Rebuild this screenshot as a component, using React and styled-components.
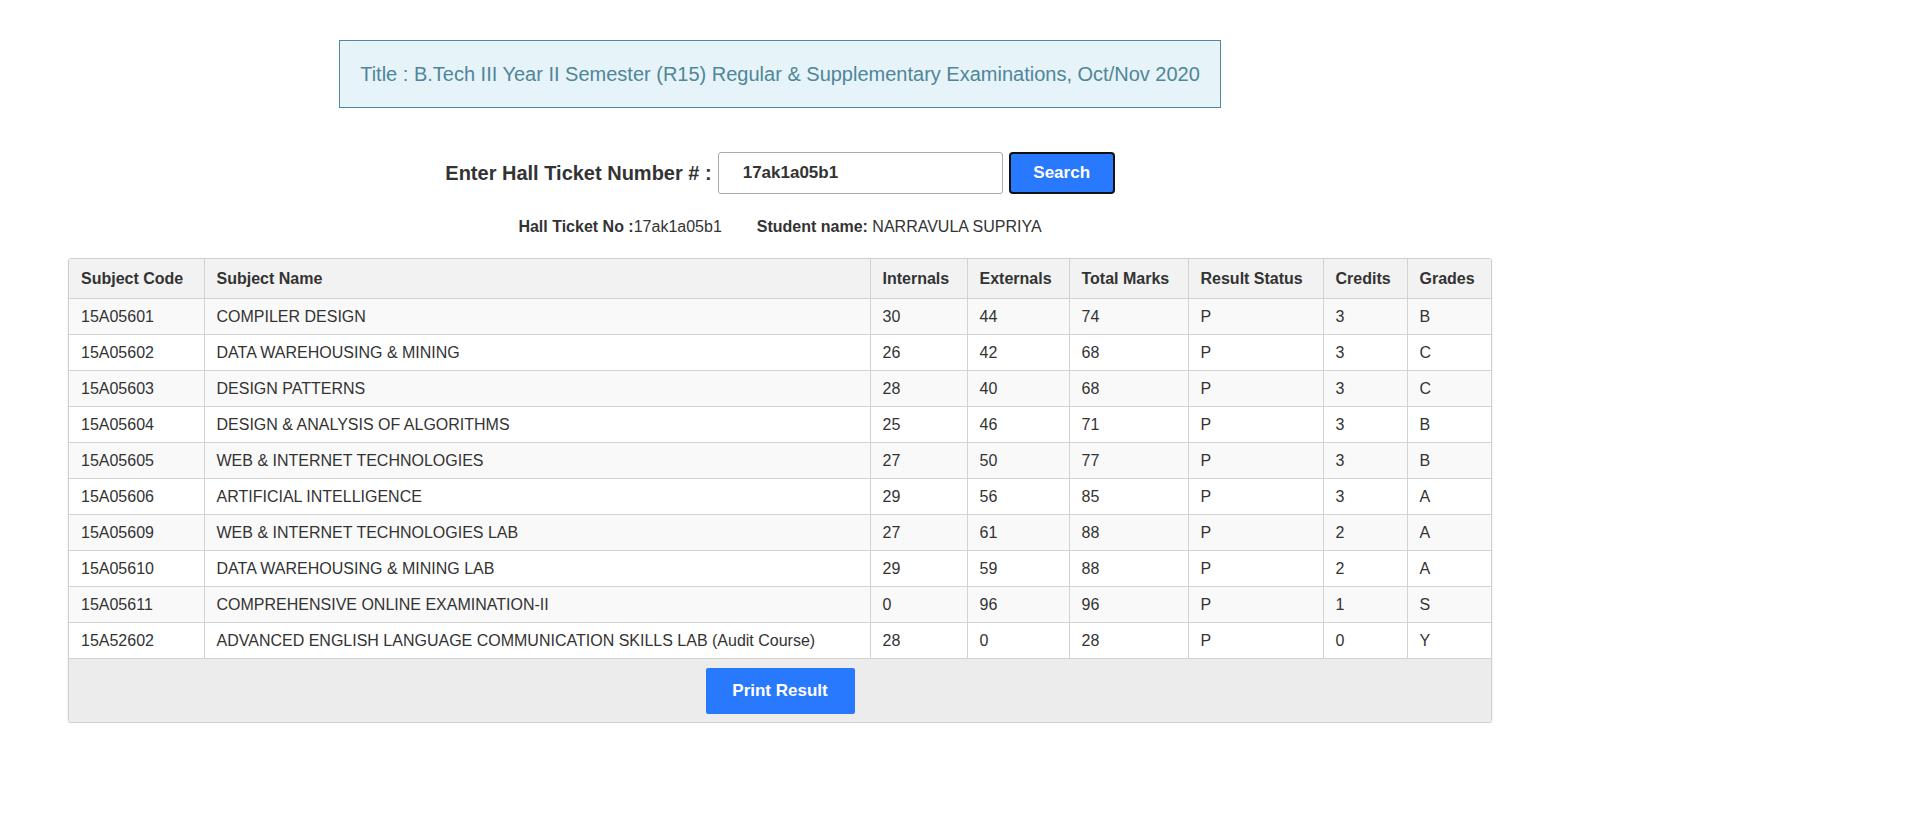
import React from 'react';
import styled, { createGlobalStyle } from 'styled-components';

const results = [
  ['15A05601', 'COMPILER DESIGN', 30, 44, 74, 'P', 3, 'B'],
  ['15A05602', 'DATA WAREHOUSING & MINING', 26, 42, 68, 'P', 3, 'C'],
  ['15A05603', 'DESIGN PATTERNS', 28, 40, 68, 'P', 3, 'C'],
  ['15A05604', 'DESIGN & ANALYSIS OF ALGORITHMS', 25, 46, 71, 'P', 3, 'B'],
  ['15A05605', 'WEB & INTERNET TECHNOLOGIES', 27, 50, 77, 'P', 3, 'B'],
  ['15A05606', 'ARTIFICIAL INTELLIGENCE', 29, 56, 85, 'P', 3, 'A'],
  ['15A05609', 'WEB & INTERNET TECHNOLOGIES LAB', 27, 61, 88, 'P', 2, 'A'],
  ['15A05610', 'DATA WAREHOUSING & MINING LAB', 29, 59, 88, 'P', 2, 'A'],
  ['15A05611', 'COMPREHENSIVE ONLINE EXAMINATION-II', 0, 96, 96, 'P', 1, 'S'],
  ['15A52602', 'ADVANCED ENGLISH LANGUAGE COMMUNICATION SKILLS LAB (Audit Course)', 28, 0, 28, 'P', 0, 'Y'],
];

const columns = [
  ['Subject Code', 135],
  ['Subject Name', 666],
  ['Internals', 97],
  ['Externals', 102],
  ['Total Marks', 119],
  ['Result Status', 135],
  ['Credits', 84],
  ['Grades', 86],
];

function App() {
  return (
    <>
      <GlobalStyle />
      <Page>
        <TitleBox>
          Title : B.Tech III Year II Semester (R15) Regular &amp; Supplementary Examinations, Oct/Nov 2020
        </TitleBox>

        <SearchRow>
          <Label htmlFor="htno">Enter Hall Ticket Number # :</Label>
          <TicketInput id="htno" defaultValue="17ak1a05b1" />
          <BlueButton $outlined>Search</BlueButton>
        </SearchRow>

        <Info>
          <span><b>Hall Ticket No :</b>17ak1a05b1</span>
          <span><b>Student name:</b> NARRAVULA SUPRIYA</span>
        </Info>

        <Card>
          <Table>
            <colgroup>
              {columns.map(([name, w]) => (
                <col key={name} style={{ width: w }} />
              ))}
            </colgroup>
            <thead>
              <tr>
                {columns.map(([name]) => (
                  <Th key={name}>{name}</Th>
                ))}
              </tr>
            </thead>
            <tbody>
              {results.map((row, i) => (
                <Row key={row[0]} $striped={i % 2 === 0}>
                  {row.map((cell, j) => (
                    <Td key={j}>{cell}</Td>
                  ))}
                </Row>
              ))}
            </tbody>
          </Table>
          <Footer>
            <BlueButton $wide>Print Result</BlueButton>
          </Footer>
        </Card>
      </Page>
    </>
  );
}

const GlobalStyle = createGlobalStyle`
  body {
    margin: 8px;
    background: #fff;
    color: #333;
    font-family: "Liberation Sans", Arial, sans-serif;
  }
`;

const Page = styled.div`
  width: 1424px;
  margin-left: 60px;
  display: flex;
  flex-direction: column;
  align-items: center;
`;

const TitleBox = styled.div`
  margin-top: 32px;
  width: 882px;
  height: 68px;
  box-sizing: border-box;
  border: 1px solid #4b8b9d;
  background: #e6f3f9;
  color: #4f8698;
  font-size: 20px;
  display: flex;
  align-items: center;
  justify-content: center;
`;

const SearchRow = styled.div`
  margin-top: 44px;
  display: flex;
  align-items: center;
`;

const Label = styled.label`
  font-size: 20px;
  font-weight: bold;
  color: #333;
  margin-right: 6px;
`;

const TicketInput = styled.input`
  width: 285px;
  height: 42px;
  box-sizing: border-box;
  border: 1px solid #aaa;
  border-radius: 3px;
  padding: 0 0 0 24px;
  font-family: inherit;
  font-size: 17px;
  font-weight: bold;
  color: #333;
  outline: none;
`;

const BlueButton = styled.button`
  margin-left: ${(p) => (p.$outlined ? '6px' : '0')};
  width: ${(p) => (p.$wide ? '149px' : '106px')};
  height: ${(p) => (p.$wide ? '46px' : '42px')};
  box-sizing: border-box;
  background: #2979ff;
  border: ${(p) => (p.$outlined ? '2px solid #111' : 'none')};
  border-radius: ${(p) => (p.$outlined ? '4px' : '2px')};
  color: #fff;
  font-family: inherit;
  font-size: 17px;
  font-weight: bold;
  cursor: pointer;
`;

const Info = styled.div`
  margin-top: 23px;
  display: flex;
  gap: 35px;
  font-size: 16px;
  line-height: 20px;

  b {
    font-weight: bold;
  }
`;

const Card = styled.div`
  margin-top: 21px;
  width: 100%;
  box-sizing: border-box;
  border: 1px solid #cfcfcf;
  border-radius: 3px;
  box-shadow: 0 1px 2px rgba(0, 0, 0, 0.12);
  overflow: hidden;
`;

const Table = styled.table`
  width: 100%;
  border-collapse: collapse;
  table-layout: fixed;
  font-size: 16px;
`;

const Th = styled.th`
  text-align: left;
  font-weight: bold;
  background: #f2f2f2;
  padding: 10px 12px;
  line-height: 19px;
  border-bottom: 1px solid #d2d2d2;
  border-left: 1px solid #d2d2d2;

  &:first-child {
    border-left: none;
  }
`;

const Row = styled.tr`
  background: ${(p) => (p.$striped ? '#f9f9f9' : '#fff')};
`;

const Td = styled.td`
  padding: 8px 12px;
  line-height: 19px;
  border-bottom: 1px solid #d2d2d2;
  border-left: 1px solid #d2d2d2;
  white-space: nowrap;

  &:first-child {
    border-left: none;
  }
`;

const Footer = styled.div`
  background: #ececec;
  height: 63px;
  display: flex;
  justify-content: center;
  align-items: center;
`;

export default App;
